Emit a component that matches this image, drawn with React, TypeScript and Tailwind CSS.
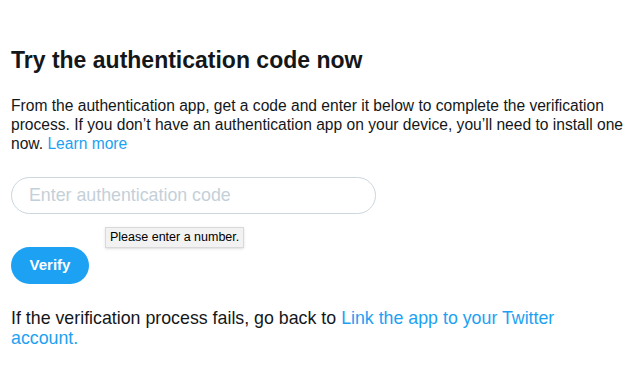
export default function App() {
  return (
    <div className="min-h-[370px] bg-white px-[11px] pt-[45px] font-['Liberation_Sans',Arial,sans-serif] text-[#14171a]">
      <h1 className="text-[23px] font-bold leading-[30px]">Try the authentication code now</h1>

      <p className="mt-[21px] text-[15.6px] leading-[19px]">
        From the authentication app, get a code and enter it below to complete the verification process. If you
        don’t have an authentication app on your device, you’ll need to install one now.{" "}
        <a href="#" className="text-[#1da1f2]">Learn more</a>
      </p>

      <div className="relative mt-[24px] w-[365px]">
        <input
          type="text"
          placeholder="Enter authentication code"
          className="h-[37px] w-full rounded-full border border-[#ccd6dd] px-[17px] text-[17.8px] outline-none placeholder:text-[#c4d0d9]"
        />
        <div className="absolute left-[94px] top-[50px] z-10 border border-[#d9d9d9] bg-[#f2f2f2] px-[4px] py-[2px] text-[12.5px] leading-[15px] text-black shadow-sm">
          Please enter a number.
        </div>
      </div>

      <button className="mt-[33px] h-[37px] w-[78px] rounded-full bg-[#1da1f2] text-[15px] font-bold text-white">
        Verify
      </button>

      <p className="mt-[24px] w-[580px] text-[17.8px] leading-[20px]">
        If the verification process fails, go back to{" "}
        <a href="#" className="text-[#1da1f2]">Link the app to your Twitter account.</a>
      </p>
    </div>
  );
}
